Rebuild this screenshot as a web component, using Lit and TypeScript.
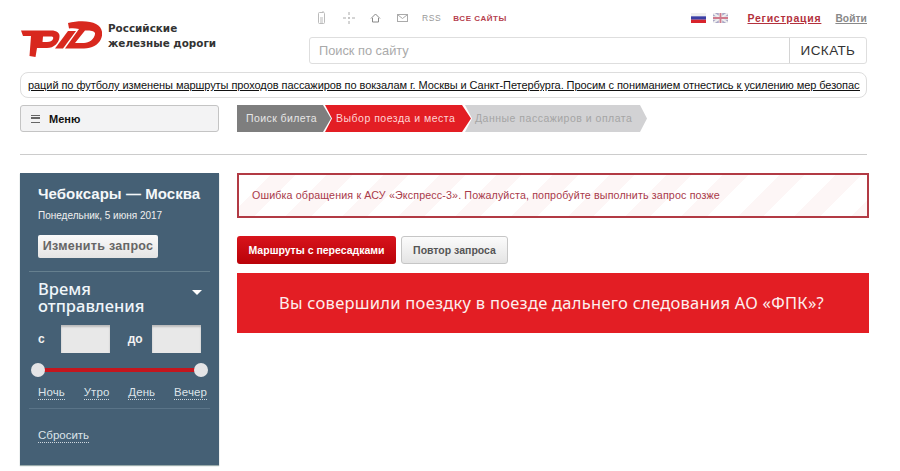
import { LitElement, html, css } from "lit";
import { customElement } from "lit/decorators.js";

@customElement("app-root")
export class AppRoot extends LitElement {
  static styles = css`
    :host { display: block; width: 900px; height: 471px; overflow: hidden; background: #fff; font-family: "Liberation Sans", Arial, sans-serif; color: #222; }
    * { box-sizing: border-box; }
    a { color: inherit; }
    .page { width: 900px; padding: 0 33px 0 20px; display: flex; flex-direction: column; }

    .top { display: flex; height: 72px; }
    .brand { width: 289px; display: flex; gap: 6px; padding-top: 20px; align-items: flex-start; }
    .logo { width: 82px; height: 38px; flex: none; }
    .brand-text { font-family: "DejaVu Sans", sans-serif; font-weight: 700; font-size: 10.4px; line-height: 15px; color: #333; padding-top: 1px; white-space: nowrap; }
    .right { flex: 1; display: flex; flex-direction: column; }
    .links { height: 37px; display: flex; align-items: center; padding: 0 0 1px 0; font-size: 8.5px; letter-spacing: .6px; color: #999; }
    .ico { display: flex; align-items: center; justify-content: center; width: 12px; height: 14px; }
    .ico svg { display: block; }
    .links .i1 { margin-left: 6px; }
    .links .i2 { margin-left: 16px; }
    .links .i3 { margin-left: 14px; }
    .links .i4 { margin-left: 15px; }
    .rss { margin-left: 14px; }
    .all { margin-left: 12px; color: #b5404e; font-weight: 700; font-size: 8px; letter-spacing: .55px; }
    .flags { margin-left: auto; display: flex; gap: 7px; align-items: center; }
    .flag { width: 15px; height: 10px; display: block; }
    .reg { margin-left: 19px; color: #b3313d; font-size: 10.5px; font-weight: 700; letter-spacing: .75px; text-decoration: underline; }
    .login { margin-left: 14px; color: #888; font-size: 10.2px; font-weight: 700; letter-spacing: .1px; text-decoration: underline; }
    .search { height: 27px; display: flex; border: 1px solid #dedede; border-radius: 3px; }
    .search .field { flex: 1; padding-left: 9px; line-height: 25px; color: #aaa; font-size: 12.8px; }
    .search .go { width: 77px; border-left: 1px solid #d4d4d4; text-align: center; line-height: 25px; font-size: 13.5px; color: #333; letter-spacing: .4px; }

    .ticker { height: 26px; border: 1px solid #ddd; border-radius: 8px; padding: 0 6px 0 7px; overflow: hidden; line-height: 24px; }
    .ticker-in { overflow: hidden; white-space: nowrap; font-size: 11px; letter-spacing: -.07px; color: #111; text-decoration: underline; }

    .nav { display: flex; margin-top: 7px; height: 28px; }
    .menu { width: 199px; height: 27px; border: 1px solid #c4c4c4; border-radius: 3px; background: #f3f3f4; display: flex; align-items: center; padding-left: 10px; gap: 9px; font-size: 11px; font-weight: 700; color: #111; }
    .burger { width: 9px; height: 8px; border-top: 1.5px solid #666; border-bottom: 1.5px solid #666; }
    .burger::after { content: ""; display: block; height: 1.5px; background: #666; margin-top: 1.7px; }
    .steps { margin-left: 18px; display: flex; height: 27px; font-size: 10.5px; letter-spacing: .5px; line-height: 27px; }
    .step { white-space: nowrap; }
    .s1 { width: 94px; padding-left: 9px; letter-spacing: .42px; background: #7e7e7e; color: #e6e6e6; clip-path: polygon(0 0, 86px 0, 100% 50%, 86px 100%, 0 100%); }
    .s2 { width: 146px; margin-left: -6px; padding-left: 11px; background: #e31e24; color: #ffd4d4; clip-path: polygon(0 0, 137px 0, 100% 50%, 137px 100%, 0 100%, 7px 50%); }
    .s3 { width: 182px; margin-left: -6px; padding-left: 10px; background: #d2d2d4; color: #a5a5a5; clip-path: polygon(0 0, 175px 0, 100% 50%, 175px 100%, 0 100%, 7px 50%); }

    .rule { height: 1px; background: #ccc; margin-top: 21px; }
    .main { display: flex; margin-top: 18px; gap: 18px; align-items: flex-start; }

    .side { width: 199px; height: 292px; flex: none; background: #456075; color: #fff; padding: 0 9px; box-shadow: 0 1px 1px #9aa; }
    .route { padding: 12px 0 0 9px; font-size: 15px; font-weight: 700; letter-spacing: .05px; line-height: 17px; color: #f4f7f9; white-space: nowrap; }
    .date { padding: 8px 0 0 9px; font-size: 10px; line-height: 12px; color: #f0f0f0; }
    .change { margin: 13px 0 0 9px; width: 120px; height: 23px; background: linear-gradient(#fafafa, #e4e4e4); border-radius: 2px; text-align: center; line-height: 23px; font-size: 12.5px; font-weight: 700; letter-spacing: .3px; color: #666; }
    .divider { height: 1px; background: #66808f; margin-top: 13px; }
    .time { display: flex; justify-content: space-between; align-items: flex-start; padding: 8px 8px 0 9px; }
    .time-t { font-family: "Noto Sans", sans-serif; font-size: 16.5px; line-height: 17px; font-weight: 500; color: #f0f6fa; }
    .caret { width: 0; height: 0; border: 5.5px solid transparent; border-top: 5px solid #fff; border-bottom: 0; margin-top: 10px; }
    .inputs { display: flex; align-items: center; padding: 11px 1px 0 9px; font-size: 12px; font-weight: 700; color: #f2f2f2; }
    .box { width: 49px; height: 28px; background: #e8e8e8; box-shadow: inset 0 2px 2px #bbb; margin-left: 16px; }
    .do { margin-left: 18px; }
    .box.b2 { margin-left: 9px; }
    .slider { height: 14px; margin: 10px 2px 0 2px; position: relative; display: flex; align-items: center; }
    .line { height: 4px; flex: 1; margin: 0 7px; background: #c3161e; }
    .thumb { position: absolute; top: 0; width: 14px; height: 14px; border-radius: 50%; background: #e4e4e6; }
    .thumb.l { left: 0; } .thumb.r { right: 0; }
    .marks { display: flex; justify-content: space-between; padding: 8px 3px 0 9px; font-size: 11.5px; line-height: 14px; letter-spacing: .1px; color: #dde4ea; }
    .marks span, .reset { border-bottom: 1px dotted #cfd8df; }
    .side .divider.d2 { margin-top: 8px; background: #5a7488; }
    .reset-row { padding: 16px 0 0 9px; }
    .reset { font-size: 11.5px; line-height: 14px; color: #dde4ea; display: inline-block; }

    .content { flex: 1; margin-right: -1px; }
    .alert { height: 45px; border: 2px solid #b23a44; padding-left: 13px; line-height: 41px; font-size: 10.7px; letter-spacing: .14px; color: #a93a4a;
      background: repeating-linear-gradient(135deg, #fff 0 22px, #fdf6f6 22px 40px); }
    .btns { display: flex; gap: 5px; margin-top: 18px; }
    .btn { height: 28px; border-radius: 3px; text-align: center; line-height: 28px; font-size: 10.5px; font-weight: 700; }
    .red { width: 159px; background: linear-gradient(#d8141c, #b90208); color: #fff; }
    .grey { width: 107px; line-height: 26px; border: 1px solid #c6c6c6; background: linear-gradient(#fbfbfb, #e4e4e4); color: #555; }
    .banner { width: 632px; height: 60px; margin-top: 9px; padding-right: 3px; background: #e31e24; color: #fdeeee; text-align: center; line-height: 60px; font-family: "Noto Sans", sans-serif; font-size: 16.5px; letter-spacing: .26px; }
  `;

  render() {
    return html`
      <div class="page">
        <div class="top">
          <div class="brand">
            <svg class="logo" viewBox="0 0 82 38" fill="#d8281e">
              <path fill-rule="evenodd" d="M1 10.500H31C37 10.500 40 13 39.500 17C39 23 34 28 27 28H17L15.500 37L9.500 36L11 16H3ZM23 16.500H31C33.500 16.500 33.500 18 33 19C32.500 21 30 22 27 22H22.500Z"/>
              <path d="M35 28.500L48 11H56L43 28.500Z"/>
              <path fill-rule="evenodd" d="M48 3C58 .5 70 .5 76 4C82 7 83.500 13 81 19C78 25 72 28.500 64 28.500H45L59 9C55 8 52 8 49 8.500ZM65 10.500L55 23H64C69 23 74.500 19 75 14C75.500 11 71 10 65 10.500Z"/>
            </svg>
            <div class="brand-text">Российские<br />железные дороги</div>
          </div>
          <div class="right">
            <div class="links">
              <span class="ico i1"><svg width="9" height="14" viewBox="0 0 9 14" fill="none" stroke="#bbb"><rect x="1.500" y="1.500" width="6" height="11" rx="1"/><path d="M3 7h3M3 9h3M3 11h3M6 1V0"/></svg></span>
              <span class="ico i2"><svg width="12" height="12" viewBox="0 0 12 12" fill="none" stroke="#aaa"><path d="M0 6h3M9 6h3M6 0v3M6 9v3"/><circle cx="6" cy="6" r=".6"/></svg></span>
              <span class="ico i3"><svg width="11" height="10" viewBox="0 0 11 10" fill="none" stroke="#888"><path d="M1 5.500 5.500 1 10 5.500M2.500 5v4h6V5"/></svg></span>
              <span class="ico i4"><svg width="11" height="8" viewBox="0 0 11 8" fill="none" stroke="#aaa"><rect x=".5" y=".5" width="10" height="7"/><path d="M1 1l4.500 3.500L10 1"/></svg></span>
              <span class="rss">RSS</span>
              <span class="all">ВСЕ САЙТЫ</span>
              <span class="flags">
                <svg class="flag" viewBox="0 0 15 10"><rect width="15" height="3.300" fill="#eee"/><rect y="3.300" width="15" height="3.400" fill="#3a3fa5"/><rect y="6.700" width="15" height="3.300" fill="#d8242c"/></svg>
                <svg class="flag" viewBox="0 0 15 10"><rect width="15" height="10" fill="#a9a6c6"/><path d="M0 0 15 10M15 0 0 10" stroke="#eee" stroke-width="2"/><path d="M7.500 0v10M0 5h15" stroke="#eee" stroke-width="3.500"/><path d="M7.500 0v10M0 5h15" stroke="#d07a8c" stroke-width="1.800"/></svg>
              </span>
              <a class="reg">Регистрация</a>
              <a class="login">Войти</a>
            </div>
            <div class="search">
              <div class="field">Поиск по сайту</div>
              <div class="go">ИСКАТЬ</div>
            </div>
          </div>
        </div>

        <div class="ticker">
          <div class="ticker-in">раций по футболу изменены маршруты проходов пассажиров по вокзалам г. Москвы и Санкт-Петербурга. Просим с пониманием отнестись к усилению мер безопасности</div>
        </div>

        <div class="nav">
          <div class="menu"><span class="burger"></span>Меню</div>
          <div class="steps">
            <div class="step s1">Поиск билета</div>
            <div class="step s2">Выбор поезда и места</div>
            <div class="step s3">Данные пассажиров и оплата</div>
          </div>
        </div>

        <div class="rule"></div>

        <div class="main">
          <aside class="side">
            <div class="route">Чебоксары — Москва</div>
            <div class="date">Понедельник, 5 июня 2017</div>
            <div class="change">Изменить запрос</div>
            <div class="divider"></div>
            <div class="time">
              <div class="time-t">Время<br />отправления</div>
              <span class="caret"></span>
            </div>
            <div class="inputs">
              <span>с</span><span class="box"></span>
              <span class="do">до</span><span class="box b2"></span>
            </div>
            <div class="slider">
              <span class="line"></span>
              <span class="thumb l"></span><span class="thumb r"></span>
            </div>
            <div class="marks"><span>Ночь</span><span>Утро</span><span>День</span><span>Вечер</span></div>
            <div class="divider d2"></div>
            <div class="reset-row"><span class="reset">Сбросить</span></div>
          </aside>

          <section class="content">
            <div class="alert">Ошибка обращения к АСУ «Экспресс-3». Пожалуйста, попробуйте выполнить запрос позже</div>
            <div class="btns">
              <div class="btn red">Маршруты с пересадками</div>
              <div class="btn grey">Повтор запроса</div>
            </div>
            <div class="banner">Вы совершили поездку в поезде дальнего следования АО «ФПК»?</div>
          </section>
        </div>
      </div>
    `;
  }
}
